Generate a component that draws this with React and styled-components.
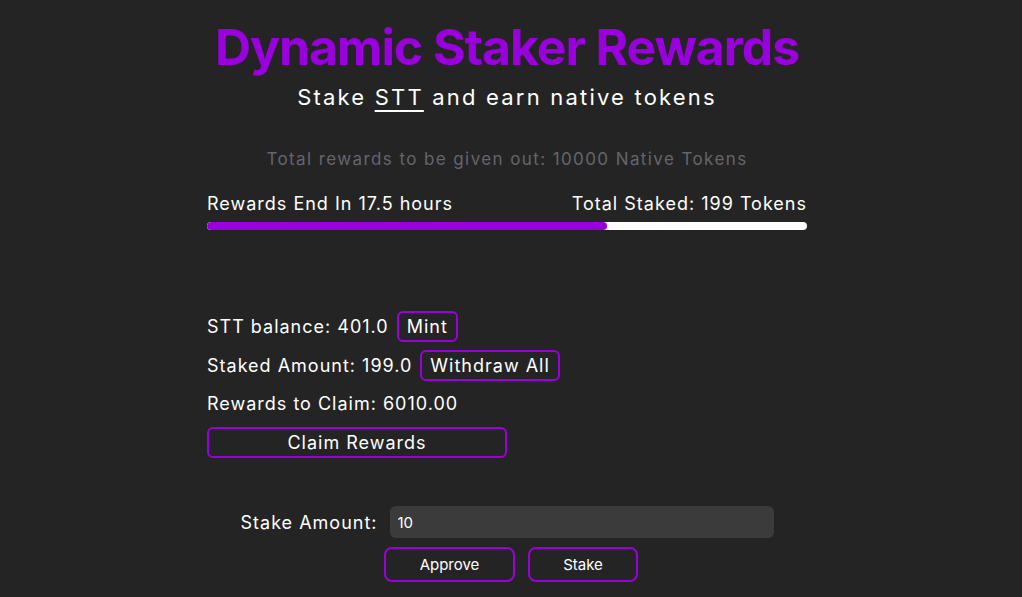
import styled, { createGlobalStyle } from "styled-components";

const purple = "#9a00de";

const Global = createGlobalStyle`
  html, body {
    margin: 0;
    background: #242424;
    color: rgba(255, 255, 255, 0.92);
    font-family: Inter, "Noto Sans", sans-serif;
  }
`;

const Page = styled.main`
  display: flex;
  flex-direction: column;
  align-items: center;
  padding: 15px 8px 0 0;
`;

const Title = styled.h1`
  margin: 0;
  font-size: 50px;
  font-weight: 700;
  line-height: 64px;
  color: ${purple};
  letter-spacing: -1.1px;
`;

const Subtitle = styled.h2`
  margin: 3px 0 0;
  font-size: 22px;
  font-weight: 400;
  line-height: 30px;
  letter-spacing: 2.2px;
  color: #fff;
  u {
    text-decoration-thickness: 2px;
    text-underline-offset: 5px;
  }
`;

const Info = styled.p`
  margin: 35px 0 0;
  font-size: 17px;
  line-height: 24px;
  letter-spacing: 1.4px;
  color: #64646f;
`;

const Panel = styled.section`
  width: 600px;
  margin-top: 21px;
  letter-spacing: 1px;
`;

const BarHead = styled.div`
  display: flex;
  justify-content: space-between;
  font-size: 18px;
  line-height: 24px;
  color: #fff;
`;

const Track = styled.div`
  margin-top: 6px;
  height: 8px;
  border-radius: 4px;
  background: #fff;
  overflow: hidden;
`;

const Fill = styled.div`
  height: 100%;
  background: ${purple};
  border-radius: 4px;
`;

const Stats = styled.div`
  margin-top: 81px;
  display: flex;
  flex-direction: column;
  gap: 8px;
  font-size: 18px;
  color: #fff;
`;

const Row = styled.div`
  display: flex;
  align-items: center;
  gap: 8px;
  line-height: 30px;
`;

const OutlineButton = styled.button`
  font-family: inherit;
  font-size: 18px;
  letter-spacing: inherit;
  color: #fff;
  background: transparent;
  border: 2px solid ${purple};
  border-radius: 6px;
  height: 31px;
  padding: 0 8px;
  width: ${(p) => (p.$w ? `${p.$w}px` : "auto")};
  cursor: pointer;
`;

const StakeForm = styled.div`
  margin-top: 48px;
  display: flex;
  flex-direction: column;
  align-items: center;
  gap: 9px;
`;

const Field = styled.label`
  display: flex;
  align-items: center;
  gap: 12px;
  font-size: 18px;
  letter-spacing: 1px;
  color: #fff;
`;

const Input = styled.input`
  width: 384px;
  height: 32px;
  box-sizing: border-box;
  border: none;
  border-radius: 6px;
  background: #3b3b3b;
  color: #fff;
  font-family: inherit;
  font-size: 15px;
  padding: 0 8px;
  outline: none;
`;

const Actions = styled.div`
  display: flex;
  gap: 13px;
  margin-left: 8px;
`;

const SmallButton = styled(OutlineButton)`
  font-size: 15px;
  letter-spacing: 0;
  height: 35px;
  border-radius: 8px;
`;

export default function App() {
  const staked = 199;
  const progress = 66.7;
  return (
    <>
      <Global />
      <Page>
        <Title>Dynamic Staker Rewards</Title>
        <Subtitle>
          Stake <u>STT</u> and earn native tokens
        </Subtitle>
        <Info>Total rewards to be given out: 10000 Native Tokens</Info>
        <Panel>
          <BarHead>
            <span>Rewards End In 17.5 hours</span>
            <span>Total Staked: {staked} Tokens</span>
          </BarHead>
          <Track>
            <Fill style={{ width: `${progress}%` }} />
          </Track>
          <Stats>
            <Row>
              STT balance: 401.0 <OutlineButton>Mint</OutlineButton>
            </Row>
            <Row>
              Staked Amount: 199.0 <OutlineButton>Withdraw All</OutlineButton>
            </Row>
            <Row>Rewards to Claim: 6010.00</Row>
            <OutlineButton $w={300}>Claim Rewards</OutlineButton>
          </Stats>
        </Panel>
        <StakeForm>
          <Field>
            Stake Amount:
            <Input defaultValue="10" />
          </Field>
          <Actions>
            <SmallButton $w={131}>Approve</SmallButton>
            <SmallButton $w={110}>Stake</SmallButton>
          </Actions>
        </StakeForm>
      </Page>
    </>
  );
}
